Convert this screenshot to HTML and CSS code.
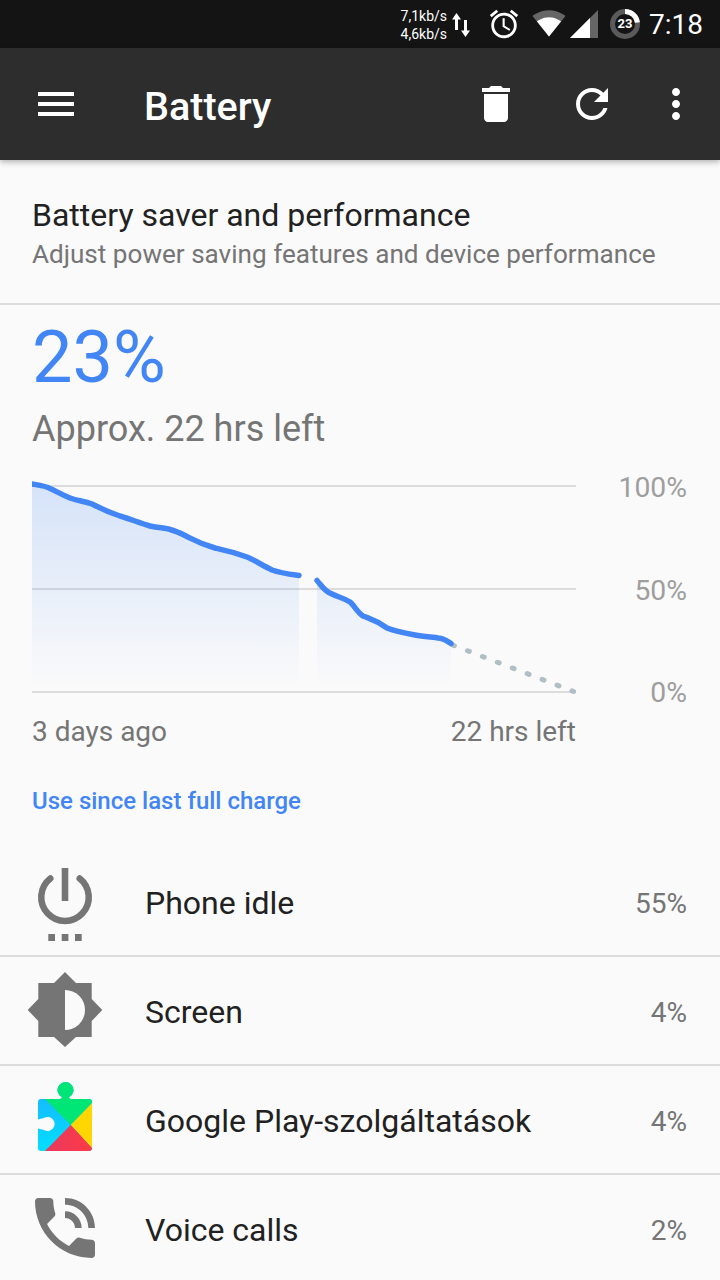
FILE: index.html
```html
<!DOCTYPE html>
<html lang="en">
<head>
    <meta charset="UTF-8">
    <meta name="viewport" content="width=device-width, initial-scale=1.0">
    <title>Battery</title>
    <link rel="stylesheet" href="styles.css">
</head>
<body>
    <div class="status-bar">
        <div class="net-speed">
            <span>7,1kb/s</span>
            <span>4,6kb/s</span>
        </div>
        <svg class="net-arrows" viewBox="0 0 18 24">
            <path d="M4.500 0L0 6.500h3V17h3V6.500h3z"/>
            <path d="M13.500 24L18 17.500h-3V7h-3v10.500H9z"/>
        </svg>
        <svg class="alarm" viewBox="0 0 24 24">
            <path d="M22 5.720l-4.600-3.860-1.290 1.530 4.600 3.860L22 5.720zM7.880 3.390L6.600 1.860 2 5.710l1.290 1.530 4.590-3.850zM12.500 8H11v6l4.750 2.850.75-1.230-4-2.370V8zM12 4c-4.970 0-9 4.030-9 9s4.020 9 9 9c4.970 0 9-4.030 9-9s-4.030-9-9-9zm0 16c-3.870 0-7-3.130-7-7s3.130-7 7-7 7 3.130 7 7-3.130 7-7 7z"/>
        </svg>
        <svg class="wifi" viewBox="0 0 24 24">
            <path class="dim" d="M12.010 21.490L23.640 7c-.45-.34-4.930-4-11.640-4C5.280 3 .81 6.660.36 7l11.630 14.490.01.01.01-.01z"/>
            <path d="M3.530 10.950l8.460 10.540.01.01.01-.01 8.460-10.540C20.040 10.620 16.810 8 12 8c-4.810 0-8.040 2.620-8.470 2.950z"/>
        </svg>
        <svg class="signal" viewBox="0 0 28 28">
            <path class="dim" d="M0 28h28V0z"/>
            <path d="M0 28h20V8z"/>
        </svg>
        <div class="battery-ring">
            <svg viewBox="0 0 32 32">
                <circle class="ring-track" cx="16" cy="16" r="12.500"/>
                <circle class="ring-level" cx="16" cy="16" r="12.500" pathLength="100" stroke-dasharray="23 77" transform="rotate(-90 16 16)"/>
            </svg>
            <span>23</span>
        </div>
        <div class="clock">7:18</div>
    </div>

    <div class="toolbar">
        <svg class="tool-icon" viewBox="0 0 24 24"><path d="M3 18h18v-2H3v2zm0-5h18v-2H3v2zm0-5h18V6H3v2z"/></svg>
        <div class="toolbar-title">Battery</div>
        <svg class="tool-icon delete" viewBox="0 0 24 24"><path d="M6 19c0 1.100.9 2 2 2h8c1.100 0 2-.9 2-2V7H6v12zM19 4h-3.500l-1-1h-5l-1 1H5v2h14V4z"/></svg>
        <svg class="tool-icon refresh" viewBox="0 0 24 24"><path d="M17.650 6.350C16.200 4.900 14.210 4 12 4c-4.420 0-7.990 3.580-7.990 8s3.570 8 7.990 8c3.730 0 6.840-2.550 7.730-6h-2.080c-.82 2.330-3.040 4-5.650 4-3.310 0-6-2.690-6-6s2.690-6 6-6c1.660 0 3.140.69 4.220 1.780L13 11h7V4l-2.350 2.350z"/></svg>
        <svg class="tool-icon more" viewBox="0 0 24 24"><path d="M12 8c1.100 0 2-.9 2-2s-.9-2-2-2-2 .9-2 2 .9 2 2 2zm0 2c-1.100 0-2 .9-2 2s.9 2 2 2 2-.9 2-2-.9-2-2-2zm0 6c-1.100 0-2 .9-2 2s.9 2 2 2 2-.9 2-2-.9-2-2-2z"/></svg>
    </div>

    <div class="saver">
        <div class="saver-title">Battery saver and performance</div>
        <div class="saver-sub">Adjust power saving features and device performance</div>
    </div>

    <div class="summary">
        <div class="percent">23%</div>
        <div class="time-left">Approx. 22 hrs left</div>
    </div>

    <div class="chart">
        <svg class="chart-plot" viewBox="0 0 544 220">
            <defs>
                <linearGradient id="area" gradientUnits="userSpaceOnUse" x1="0" y1="4" x2="0" y2="208">
                    <stop offset="0" stop-color="#4285f4" stop-opacity="0.2"/>
                    <stop offset="1" stop-color="#4285f4" stop-opacity="0"/>
                </linearGradient>
            </defs>
            <rect class="grid" x="0" y="5" width="544" height="2"/>
            <rect class="grid" x="0" y="108" width="544" height="2"/>
            <rect class="grid" x="0" y="211" width="544" height="2"/>
            <path fill="url(#area)" d="M0 4 C6 5 14 6 18 8.500 C22 10 28 14 38 18 C46 21 52 21 60 24 C66 27 73 31 88 36 C98 39 108 43 118 46 C128 48 134 48 138 49.500 C144 51 148 53 154 56 C162 60 166 63 183 68 C190 69.500 198 71 215 77 C222 80 230 85 240 90 C248 93 256 94 267 95.500 V208 H0 Z"/>
            <path fill="url(#area)" d="M285 100.500 C289 105 293 112 300 114 C306 117 312 118 318 122 C322 125 325 132 331 136 C338 139 344 140 355 148 C362 151 372 153 383 155 C392 157 402 157 406 158 C411 158 415 161 419 163 V208 H285 Z"/>
            <path class="projection" d="M420.500 165 L541.500 211.500"/>
            <path class="curve" d="M0 4 C6 5 14 6 18 8.500 C22 10 28 14 38 18 C46 21 52 21 60 24 C66 27 73 31 88 36 C98 39 108 43 118 46 C128 48 134 48 138 49.500 C144 51 148 53 154 56 C162 60 166 63 183 68 C190 69.500 198 71 215 77 C222 80 230 85 240 90 C248 93 256 94 267 95.500"/>
            <path class="curve" d="M285 100.500 C289 105 293 112 300 114 C306 117 312 118 318 122 C322 125 325 132 331 136 C338 139 344 140 355 148 C362 151 372 153 383 155 C392 157 402 157 406 158 C411 158 415 161 419 163.500"/>
        </svg>
        <div class="chart-scale">
            <span>100%</span>
            <span>50%</span>
            <span>0%</span>
        </div>
    </div>
    <div class="chart-range">
        <span>3 days ago</span>
        <span>22 hrs left</span>
    </div>

    <div class="section-label">Use since last full charge</div>

    <div class="usage-list">
        <div class="usage-row">
            <svg class="usage-icon" viewBox="0 0 80 107">
                <path class="outline" d="M25.300 30.500 A23.750 23.750 0 1 0 54.700 30.500"/>
                <rect class="solid" x="36.700" y="20" width="6.600" height="33"/>
                <rect class="solid" x="23.300" y="86" width="6.700" height="7"/>
                <rect class="solid" x="36.700" y="86" width="6.700" height="7"/>
                <rect class="solid" x="50" y="86" width="6.700" height="7"/>
            </svg>
            <div class="usage-name">Phone idle</div>
            <div class="usage-value">55%</div>
        </div>
        <div class="usage-row">
            <svg class="usage-icon" viewBox="0 0 80 107">
                <path class="solid" d="M40 15 L51 26 H66.700 V42 L77.300 53 L66.700 64 V80 H51 L40 90 L29 80 H13.300 V64 L2.700 53 L13.300 42 V26 H29 Z"/>
                <path class="moon" d="M40 33 A20 20 0 0 1 40 73 Z"/>
            </svg>
            <div class="usage-name">Screen</div>
            <div class="usage-value">4%</div>
        </div>
        <div class="usage-row">
            <svg class="usage-icon" viewBox="0 0 80 107">
                <defs>
                    <clipPath id="piece">
                        <path d="M16 33 H35 Q37.500 33 36.700 31 A8 8 0 1 1 44.300 31 Q43.500 33 46 33 H64 Q67 33 67 36 V82 Q67 85 64 85 H16 Q13 85 13 82 V62.500 L19 64 A7 7 0 1 0 19 52 L13 53.500 V36 Q13 33 16 33 Z"/>
                    </clipPath>
                    <linearGradient id="play-blue" x1="0" y1="0" x2="0" y2="1">
                        <stop offset="0" stop-color="#1cb0ff"/>
                        <stop offset="1" stop-color="#00e2ff"/>
                    </linearGradient>
                    <linearGradient id="play-red" x1="0" y1="0" x2="1" y2="0">
                        <stop offset="0" stop-color="#e8395f"/>
                        <stop offset="1" stop-color="#ff3a44"/>
                    </linearGradient>
                </defs>
                <g clip-path="url(#piece)">
                    <rect x="10" y="15" width="60" height="75" fill="url(#play-blue)"/>
                    <path d="M20 33 L30 15 H50 L70 15 V37 L67 37 L45.700 59 Z" fill="#00e676"/>
                    <path d="M67 37 H70 V85 L67 82 L45.700 59 Z" fill="#ffd600"/>
                    <path d="M20 85 L45.700 59 L67 82 L70 90 H20 Z" fill="url(#play-red)"/>
                </g>
            </svg>
            <div class="usage-name">Google Play-szolgáltatások</div>
            <div class="usage-value">4%</div>
        </div>
        <div class="usage-row">
            <svg class="usage-icon" viewBox="0 0 80 107">
                <path class="solid" transform="translate(0 13) scale(3.333)" d="M20 15.500c-1.250 0-2.450-.2-3.570-.57-.35-.11-.74-.03-1.020.24l-2.200 2.200c-2.830-1.440-5.150-3.750-6.590-6.590l2.200-2.210c.28-.26.36-.65.25-1C8.700 6.450 8.500 5.250 8.500 4c0-.55-.45-1-1-1H4c-.55 0-1 .45-1 1 0 9.390 7.610 17 17 17 .55 0 1-.45 1-1v-3.500c0-.55-.45-1-1-1zM19 12h2c0-4.970-4.030-9-9-9v2c3.870 0 7 3.130 7 7zm-4 0h2c0-2.760-2.240-5-5-5v2c1.660 0 3 1.340 3 3z"/>
            </svg>
            <div class="usage-name">Voice calls</div>
            <div class="usage-value">2%</div>
        </div>
    </div>
</body>
</html>
```

FILE: styles.css
```css
html, body {
    height: 1280px;
    overflow: hidden;
}
body {
    margin: 0;
    background-color: #fafafa;
    font-family: Roboto, sans-serif;
    color: #212121;
}
svg {
    display: block;
    flex: none;
}

.status-bar {
    height: 48px;
    background-color: #141414;
    display: flex;
    align-items: center;
    justify-content: flex-end;
    color: #fff;
    fill: #fff;
}
.net-speed {
    display: flex;
    flex-direction: column;
    align-items: flex-end;
    font-size: 14px;
    line-height: 18px;
    margin-top: 1px;
}
.net-arrows {
    width: 18px;
    height: 24px;
    margin-left: 5px;
    margin-top: 1px;
}
.alarm {
    width: 34px;
    height: 34px;
    margin-left: 17px;
}
.wifi {
    width: 34px;
    height: 34px;
    margin-left: 11px;
    margin-top: -3px;
}
.signal {
    width: 28px;
    height: 28px;
    margin-left: 4px;
}
.dim {
    fill: #666;
}
.battery-ring {
    width: 32px;
    height: 32px;
    margin-left: 11px;
    position: relative;
}
.battery-ring span {
    position: absolute;
    inset: 0;
    text-align: center;
    font-size: 13px;
    font-weight: 700;
    line-height: 32px;
}
.ring-track, .ring-level {
    fill: none;
    stroke-width: 5;
}
.ring-track {
    stroke: #5a5a5a;
}
.ring-level {
    stroke: #fff;
}
.clock {
    font-size: 28px;
    margin-left: 8px;
    margin-right: 17px;
}

.toolbar {
    height: 112px;
    background-color: #2d2d2d;
    display: flex;
    align-items: center;
    padding: 0 20px 0 32px;
    box-shadow: 0 2px 6px rgba(0,0,0,0.3);
    position: relative;
    fill: #fff;
}
.tool-icon {
    width: 48px;
    height: 48px;
}
.toolbar-title {
    margin: 4px 0 0 64px;
    font-size: 39.500px;
    font-weight: 500;
    color: #fff;
}
.delete {
    margin-left: auto;
}
.refresh {
    margin-left: 48px;
}
.more {
    margin-left: 36px;
}

.saver {
    box-sizing: border-box;
    height: 145px;
    padding: 35px 32px 0;
    border-bottom: 2px solid #dcdcdc;
}
.saver-title {
    font-size: 32px;
    line-height: 40px;
}
.saver-sub {
    font-size: 26.100px;
    line-height: 38px;
    color: #757575;
}

.summary {
    padding: 0 32px;
}
.percent {
    font-size: 72px;
    line-height: 106px;
    color: #4285f4;
    height: 101px;
}
.time-left {
    font-size: 36px;
    line-height: 46px;
    color: #757575;
}

.chart {
    display: flex;
    padding-left: 32px;
    margin-top: 28px;
}
.chart-plot {
    width: 544px;
    height: 220px;
}
.grid {
    fill: #dcdcdc;
}
.curve {
    fill: none;
    stroke: #4285f4;
    stroke-width: 5.500;
    stroke-linecap: round;
    stroke-linejoin: round;
}
.projection {
    fill: none;
    stroke: #b0bec5;
    stroke-width: 5;
    stroke-linecap: round;
    stroke-dasharray: 2 14;
}
.chart-scale {
    flex: 1;
    height: 239px;
    margin-top: -9px;
    padding-right: 33px;
    display: flex;
    flex-direction: column;
    justify-content: space-between;
    align-items: flex-end;
    font-size: 28.300px;
    line-height: 34px;
    color: #9e9e9e;
}
.chart-range {
    width: 544px;
    margin: 4px 0 0 32px;
    display: flex;
    justify-content: space-between;
    font-size: 28px;
    line-height: 36px;
    color: #757575;
}

.section-label {
    margin: 35px 0 0 32px;
    font-size: 24px;
    line-height: 32px;
    font-weight: 500;
    color: #4285f4;
}

.usage-list {
    margin-top: 31px;
}
.usage-row {
    height: 107px;
    padding: 0 33px 0 25px;
    border-bottom: 2px solid #dcdcdc;
    display: flex;
    align-items: center;
}
.usage-icon {
    width: 80px;
    height: 107px;
}
.usage-name {
    margin: 3px 0 0 40px;
    font-size: 32px;
}
.usage-value {
    margin: 3px 0 0 auto;
    font-size: 28px;
    color: #757575;
}
.solid {
    fill: #757575;
}
.outline {
    fill: none;
    stroke: #757575;
    stroke-width: 6.500;
    stroke-linecap: round;
}
.moon {
    fill: #fafafa;
}
```
